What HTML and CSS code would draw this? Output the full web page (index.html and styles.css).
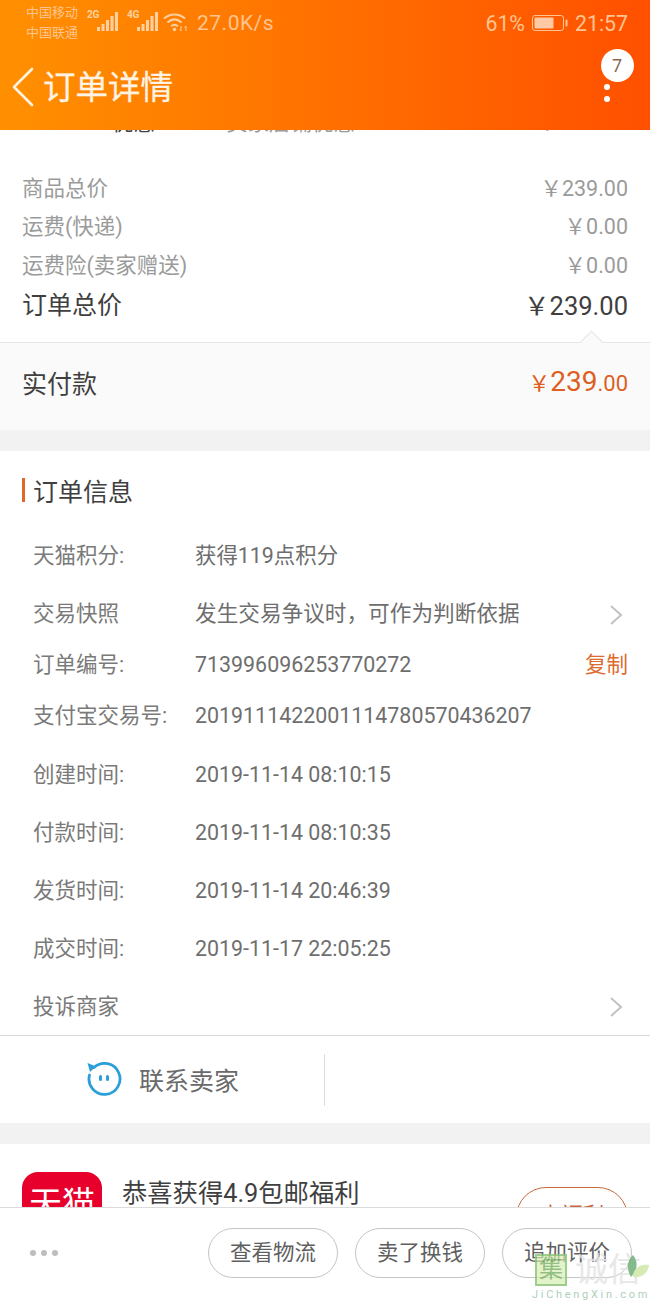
FILE: index.html
```html
<!DOCTYPE html>
<html lang="zh-CN">
<head>
<meta charset="utf-8">
<title>订单详情</title>
<link rel="stylesheet" href="styles.css">
</head>
<body>
<div class="screen">
  <header class="topbar">
    <div class="status">
      <div class="carriers"><span>中国移动</span><span>中国联通</span></div>
      <div class="signal">
        <span class="net">2G</span>
        <svg class="bars" width="22" height="20" viewBox="0 0 22 20"><path d="M0 19h3v-4H0zM4.500 19h3v-7h-3zM9 19h3V8H9zM13.500 19h3V4h-3zM18 19h3V0h-3z" fill="#ffd09f"/></svg>
        <span class="net net-second">4G</span>
        <svg class="bars" width="22" height="20" viewBox="0 0 22 20"><path d="M0 19h3v-4H0zM4.500 19h3v-7h-3zM9 19h3V8H9zM13.500 19h3V4h-3zM18 19h3V0h-3z" fill="#ffd09f"/></svg>
        <svg class="wifi" width="26" height="20" viewBox="0 0 26 20" fill="none" stroke="#ffd09f" stroke-width="2"><path d="M1 6.500C7 1 16 1 22 6.500M4.500 10.500C9 6.500 14 6.500 18.500 10.500M8 14.300c2.500-2 4.500-2 7 0"/><circle cx="11.500" cy="17.500" r="1.800" fill="#ffd09f" stroke="none"/><path d="M18 14v5M16.500 17.500l1.500 1.500M23 19v-5M21.500 15.500l1.500-1.500" stroke-width="1"/></svg>
      </div>
      <span class="speed">27.0K/s</span>
      <div class="status-right">
        <span class="percent">61%</span>
        <svg class="battery" width="36" height="18" viewBox="0 0 36 18"><rect x=".5" y="1.500" width="31" height="15" rx="2.500" fill="none" stroke="#ffc48f"/><rect x="2.500" y="3.500" width="19" height="11" rx="1" fill="#ffc9a6"/><rect x="33.500" y="5.500" width="2" height="7" rx="1" fill="#ffc48f"/></svg>
        <span class="clock">21:57</span>
      </div>
    </div>
    <div class="navrow">
      <svg class="back" width="24" height="40" viewBox="0 0 24 40" fill="none" stroke="#fff3e4" stroke-width="2.600" stroke-linecap="round" stroke-linejoin="round"><path d="M21 2 3 20l18 18"/></svg>
      <h1 class="title">订单详情</h1>
      <div class="more">
        <span class="badge">7</span>
        <span class="dot"></span>
        <span class="dot"></span>
      </div>
    </div>
  </header>

  <main class="content">
    <div class="cut-line"><span class="cut-dark">优惠</span><span>卖家店铺优惠</span><span class="cut-amount">￥0.00</span></div>

    <section class="prices">
      <div class="price-row"><span>商品总价</span><span>￥239.00</span></div>
      <div class="price-row"><span>运费(快递)</span><span>￥0.00</span></div>
      <div class="price-row"><span>运费险(卖家赠送)</span><span>￥0.00</span></div>
      <div class="price-row total"><span class="total-label">订单总价</span><span>￥239.00</span></div>
    </section>

    <section class="paid">
      <span class="notch"></span>
      <span class="paid-label">实付款</span>
      <span class="paid-sum"><span class="yen">￥</span><span class="int">239</span><span class="dec">.00</span></span>
    </section>

    <section class="info">
      <h2 class="info-title">订单信息</h2>
      <div class="info-row r-points"><span class="key">天猫积分:</span><span class="val">获得119点积分</span></div>
      <div class="info-row r-snap"><span class="key">交易快照</span><span class="val">发生交易争议时，可作为判断依据</span>
        <svg class="chev" width="14" height="22" viewBox="0 0 14 22" fill="none" stroke="#c2c2c2" stroke-width="2"><path d="M2 2l10 9-10 9"/></svg></div>
      <div class="info-row r-no"><span class="key">订单编号:</span><span class="val">713996096253770272</span><span class="copy">复制</span></div>
      <div class="info-row r-ali"><span class="key">支付宝交易号:</span><span class="val">2019111422001114780570436207</span></div>
      <div class="info-row r-time"><span class="key">创建时间:</span><span class="val">2019-11-14 08:10:15</span></div>
      <div class="info-row r-time"><span class="key">付款时间:</span><span class="val">2019-11-14 08:10:35</span></div>
      <div class="info-row r-time"><span class="key">发货时间:</span><span class="val">2019-11-14 20:46:39</span></div>
      <div class="info-row r-time"><span class="key">成交时间:</span><span class="val">2019-11-17 22:05:25</span></div>
      <div class="info-row r-time"><span class="key">投诉商家</span>
        <svg class="chev" width="14" height="22" viewBox="0 0 14 22" fill="none" stroke="#c2c2c2" stroke-width="2"><path d="M2 2l10 9-10 9"/></svg></div>
    </section>

    <section class="contact">
      <div class="contact-cell">
        <svg width="38" height="38" viewBox="0 0 38 38" fill="none"><path d="M9 7.500A15.500 15.500 0 1 1 4.500 15" stroke="#2a9fd8" stroke-width="2.800" stroke-linecap="round"/><path d="M2.500 3 11 6.500 5 12z" fill="#2a9fd8"/><rect x="14" y="15" width="3" height="6" rx="1.500" fill="#2a9fd8"/><rect x="21" y="15" width="3" height="6" rx="1.500" fill="#2a9fd8"/></svg>
        <span>联系卖家</span>
      </div>
      <div class="contact-cell"></div>
    </section>

    <section class="promo">
      <div class="tmall-logo"><span>天猫</span></div>
      <span class="promo-text">恭喜获得4.9包邮福利</span>
      <span class="promo-btn">查福利</span>
    </section>
  </main>

  <footer class="actions">
    <div class="dots"><i></i><i></i><i></i></div>
    <div class="btns">
      <span class="btn">查看物流</span>
      <span class="btn">卖了换钱</span>
      <span class="btn">追加评价</span>
    </div>
  </footer>

  <div class="mark">
    <div class="mark-top">
      <span class="mark-seal">集</span>
      <span class="mark-name">诚信</span>
      <svg class="mark-leaf" width="24" height="30" viewBox="0 0 24 30"><path d="M5 24C0 15 1 8 7 2c5 6 5 15-2 22z" fill="#6faf78"/><path d="M7 24c0-8 6-13 16-12-1 8-7 13-16 12z" fill="#cfe8a8"/></svg>
    </div>
    <div class="mark-url">JiChengXin.com</div>
  </div>
</div>
</body>
</html>
```
FILE: styles.css
```css
* { box-sizing: border-box; }
html, body { margin: 0; padding: 0; }
body {
  font-family: Roboto, "Noto Sans CJK SC", sans-serif;
  background: #fff;
}
.screen {
  position: relative;
  width: 650px;
  height: 1300px;
  overflow: hidden;
  display: flex;
  flex-direction: column;
}

/* top bar */
.topbar {
  height: 130px;
  flex: none;
  background: linear-gradient(90deg, #ff9000, #ff5000);
  display: flex;
  flex-direction: column;
  position: relative;
  z-index: 2;
}
.status {
  height: 46px;
  display: flex;
  align-items: center;
  padding: 0 22px 0 26px;
  color: #ffc48f;
}
.carriers {
  display: flex;
  flex-direction: column;
  font-size: 13px;
  line-height: 20px;
  width: 61px;
}
.signal {
  display: flex;
  align-items: flex-end;
  height: 20px;
  align-self: flex-start;
  margin-top: 12px;
}
.net {
  width: 10px;
  font-size: 10px;
  line-height: 10px;
  font-weight: 700;
  letter-spacing: -.3px;
  align-self: flex-start;
  margin-top: -2px;
  white-space: nowrap;
  color: #ffd09f;
}
.net-second { margin-left: 8px; }
.bars { margin-bottom: 0; flex: none; }
.wifi { margin-left: 4px; flex: none; }
.speed { font-size: 21px; margin-left: 8px; letter-spacing: .5px; }
.status-right { margin-left: auto; display: flex; align-items: center; gap: 7px; font-size: 21.300px; }
.navrow {
  flex: 1;
  display: flex;
  align-items: center;
  padding: 0 37px 2px 11px;
}
.title {
  margin: 2px 0 0 8px;
  font-size: 32.500px;
  font-weight: 400;
  line-height: 44px;
  color: #fff3e4;
  -webkit-text-stroke: .3px #fff3e4;
}
.more {
  position: relative;
  margin-left: auto;
  margin-top: 12px;
  width: 12px;
  display: flex;
  flex-direction: column;
  align-items: center;
  gap: 6px;
}
.badge {
  position: absolute;
  left: -.5px;
  top: -35px;
  width: 33px;
  height: 33px;
  border-radius: 50%;
  background: #fff;
  color: #8a6a55;
  font-size: 18px;
  line-height: 33px;
  text-align: center;
}
.dot { width: 6px; height: 6px; border-radius: 50%; background: #fff; }

/* scrolled content */
.content { flex: 1; min-height: 0; overflow: hidden; background: #f2f2f2; position: relative; }
.cut-line {
  height: 40px;
  margin-top: -27px;
  padding: 0 50px 0 112px;
  background: #fff;
  display: flex;
  gap: 71px;
  font-size: 21.500px;
  line-height: 40px;
  color: #9b9b9b;
}
.cut-dark { color: #3f3f3f; }
.cut-amount { margin-left: auto; }
.prices { background: #fff; padding: 24px 22px 0; }
.price-row {
  display: flex;
  justify-content: space-between;
  height: 38.500px;
  align-items: center;
  font-size: 21.500px;
  color: #9b9b9b;
}
.price-row.total { height: 59.500px; font-size: 25.500px; color: #3f3f3f; padding-bottom: 18.500px; }
.total-label { font-size: 25px; }
.paid {
  position: relative;
  height: 88px;
  background: #fafafa;
  border-top: 1px solid #e6e6e6;
  display: flex;
  justify-content: space-between;
  align-items: center;
  padding: 0 22px 10px;
}
.notch {
  position: absolute;
  right: 50px;
  top: -9px;
  width: 17px;
  height: 17px;
  background: #fafafa;
  border-left: 1px solid #e6e6e6;
  border-top: 1px solid #e6e6e6;
  transform: rotate(45deg);
}
.paid-label { font-size: 25px; color: #3f3f3f; }
.paid-sum { color: #dd5f22; display: flex; align-items: baseline; }
.yen { font-size: 22px; }
.int { font-size: 28px; }
.dec { font-size: 22px; }

/* order info */
.info { margin-top: 21px; background: #fff; border-bottom: 1px solid #d9d9d9; }
.info-title {
  margin: 0 0 0 22px;
  height: 78px;
  display: flex;
  align-items: center;
  padding-left: 11px;
  font-size: 25px;
  font-weight: 400;
  color: #3f3f3f;
  position: relative;
}
.info-title::before {
  content: "";
  position: absolute;
  left: 0;
  top: 27px;
  width: 3px;
  height: 24px;
  background: #e0662a;
}
/* baseline alignment keeps Latin values level with the Chinese labels */
.info-row {
  display: flex;
  align-items: baseline;
  padding: 1px 22px 0 33px;
  font-size: 21.500px;
  color: #7a7a7a;
}
.r-points { height: 54px; line-height: 52px; }
.r-snap { height: 62px; line-height: 60px; }
.r-snap .val { font-size: 21.650px; }
.r-no { height: 40px; line-height: 38px; }
.r-ali { height: 60px; line-height: 60px; }
.r-time { height: 58px; line-height: 58px; }
.key { width: 162px; flex: none; }
.val { flex: 1; font-size: 21.400px; color: #6e6e6e; }
.chev { margin-left: auto; margin-right: 5px; align-self: center; }
.copy { color: #dd6a2e; font-size: 21.500px; }

/* contact */
.contact { height: 87px; background: #fff; display: flex; align-items: center; }
.contact-cell {
  width: 327px;
  height: 52px;
  display: flex;
  align-items: center;
  padding: 0 0 2px 85px;
  gap: 16px;
  font-size: 25px;
  color: #6a6a6a;
}
.contact-cell:first-child { border-right: 1px solid #dcdcdc; }

/* promo */
.promo { margin-top: 21px; height: 100px; background: #fff; display: flex; padding: 28px 22px 0; gap: 20px; }
.tmall-logo {
  width: 80px;
  height: 80px;
  border-radius: 16px;
  background: #e8002d;
  color: #fff;
  font-size: 33px;
  line-height: 64px;
  text-align: center;
  flex: none;
}
.promo-text { font-size: 25.300px; line-height: 44px; color: #3f3f3f; white-space: nowrap; flex: none; }
.promo-btn {
  flex: none;
  margin-left: auto;
  width: 112px;
  height: 60px;
  margin-top: 15px;
  border: 1.500px solid #c8673a;
  border-radius: 30px;
  text-align: center;
  line-height: 56px;
  font-size: 21.500px;
  color: #c8673a;
}

/* bottom actions */
.actions {
  height: 93px;
  flex: none;
  background: #fff;
  border-top: 1px solid #dcdcdc;
  display: flex;
  align-items: center;
  padding: 0 18px 2px 30px;
  position: relative;
  z-index: 2;
}
.dots { display: flex; gap: 5px; }
.dots i { width: 6px; height: 6px; border-radius: 50%; background: #bdbdbd; }
.btns { margin-left: auto; display: flex; gap: 17px; }
.btn {
  width: 130px;
  height: 50px;
  border: 1px solid #c4c4c4;
  border-radius: 25px;
  text-align: center;
  line-height: 48px;
  font-size: 21.500px;
  color: #5f5f5f;
}

/* site stamp in the corner */
.mark {
  position: absolute;
  left: 532px;
  bottom: 0;
  width: 118px;
  height: 47px;
  z-index: 3;
  opacity: .85;
}
.mark-top { display: flex; align-items: center; height: 33px; position: relative; padding-left: 3px; }
.mark-seal {
  width: 32px;
  height: 32px;
  background: rgba(214, 238, 176, .8);
  border: 2px solid #8fc57a;
  color: #7fb56e;
  font-size: 24px;
  line-height: 27px;
  text-align: center;
  flex: none;
}
.mark-name { font-size: 33px; color: #e4e4e4; margin-left: 8px; line-height: 33px; white-space: nowrap; }
.mark-leaf { position: absolute; right: 0; top: 0; }
.mark-url { font-size: 11px; letter-spacing: 2.700px; color: #9fc9b0; margin-top: 3px; line-height: 11px; white-space: nowrap; }
```
